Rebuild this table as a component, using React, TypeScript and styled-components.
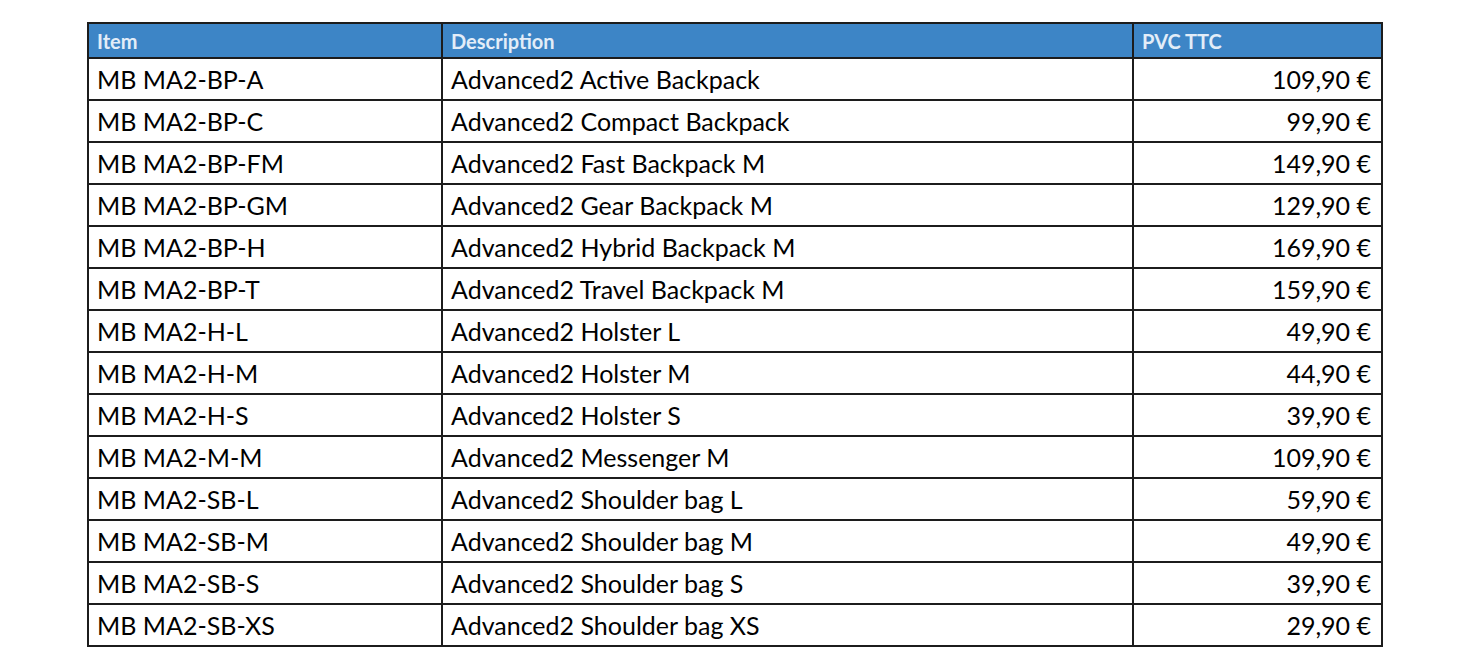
import React from 'react';
import { styled, createGlobalStyle } from 'styled-components';

const rows = [
  ['MB MA2-BP-A', 'Advanced2 Active Backpack', '109,90 €'],
  ['MB MA2-BP-C', 'Advanced2 Compact Backpack', '99,90 €'],
  ['MB MA2-BP-FM', 'Advanced2 Fast Backpack M', '149,90 €'],
  ['MB MA2-BP-GM', 'Advanced2 Gear Backpack M', '129,90 €'],
  ['MB MA2-BP-H', 'Advanced2 Hybrid Backpack M', '169,90 €'],
  ['MB MA2-BP-T', 'Advanced2 Travel Backpack M', '159,90 €'],
  ['MB MA2-H-L', 'Advanced2 Holster L', '49,90 €'],
  ['MB MA2-H-M', 'Advanced2 Holster M', '44,90 €'],
  ['MB MA2-H-S', 'Advanced2 Holster S', '39,90 €'],
  ['MB MA2-M-M', 'Advanced2 Messenger M', '109,90 €'],
  ['MB MA2-SB-L', 'Advanced2 Shoulder bag L', '59,90 €'],
  ['MB MA2-SB-M', 'Advanced2 Shoulder bag M', '49,90 €'],
  ['MB MA2-SB-S', 'Advanced2 Shoulder bag S', '39,90 €'],
  ['MB MA2-SB-XS', 'Advanced2 Shoulder bag XS', '29,90 €'],
];

const GlobalStyle = createGlobalStyle`
  body {
    margin: 0;
    background: #ffffff;
    font-family: Lato, "Liberation Sans", sans-serif;
  }
`;

const Page = () => {
  return (
    <Wrapper>
      <GlobalStyle />
      <PriceTable>
        <colgroup>
          <col style={{ width: 354 }} />
          <col style={{ width: 691 }} />
          <col style={{ width: 249 }} />
        </colgroup>
        <thead>
          <HeadRow>
            <HeadCell>Item</HeadCell>
            <HeadCell>Description</HeadCell>
            <HeadCell>PVC TTC</HeadCell>
          </HeadRow>
        </thead>
        <tbody>
          {rows.map(([item, desc, price]) => (
            <BodyRow key={item}>
              <Cell>{item}</Cell>
              <Cell>{desc}</Cell>
              <Cell $right>{price}</Cell>
            </BodyRow>
          ))}
        </tbody>
      </PriceTable>
    </Wrapper>
  );
};

const Wrapper = styled.div`
  padding: 22px 0 0 87px;
`;

const PriceTable = styled.table`
  border-collapse: collapse;
  table-layout: fixed;
  width: 1294px;
  border: 2px solid #1c1c1c;
`;

const HeadRow = styled.tr`
  height: 35px;
  background-color: #3d85c6;
`;

const HeadCell = styled.th`
  text-align: left;
  padding: 0 8px;
  font-size: 20px;
  font-weight: 700;
  color: #e3edf8;
  border: 2px solid #1c1c1c;
`;

const BodyRow = styled.tr`
  height: 42px;
`;

const Cell = styled.td<{ $right?: boolean }>`
  padding: 0 ${(p) => (p.$right ? '10px' : '8px')} 0 8px;
  text-align: ${(p) => (p.$right ? 'right' : 'left')};
  font-size: 25px;
  color: #000000;
  border: 2px solid #1c1c1c;
  white-space: nowrap;
`;

export default Page;
